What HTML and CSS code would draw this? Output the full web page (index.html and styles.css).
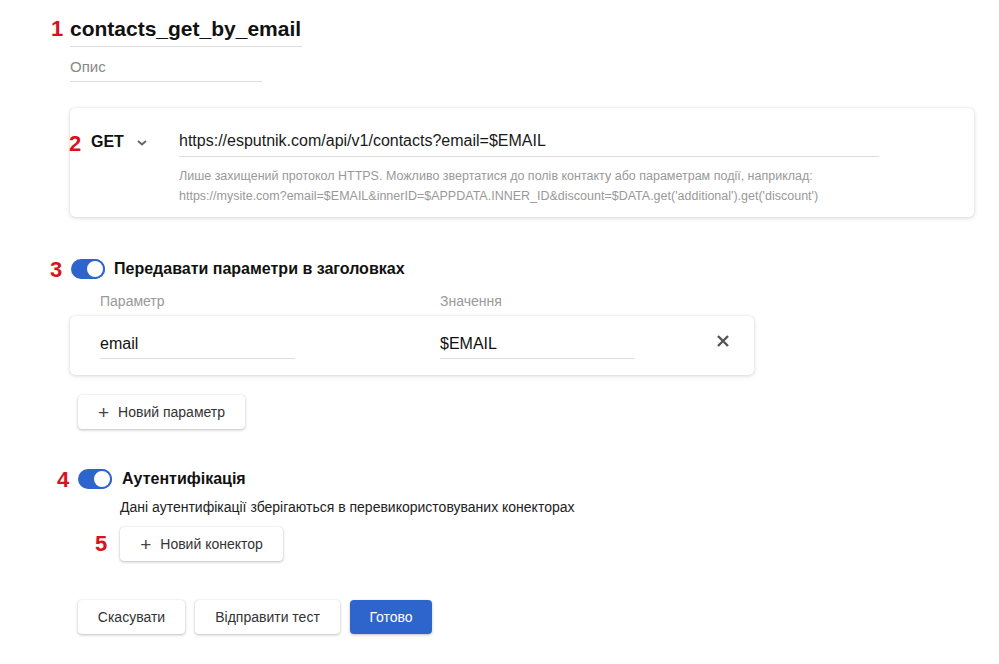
FILE: index.html
```html
<!DOCTYPE html>
<html lang="uk">
<head>
<meta charset="utf-8">
<link rel="stylesheet" href="styles.css">
</head>
<body>
<div class="page">
  <div class="name-block">
    <span class="marker m1">1</span>
    <div class="title">contacts_get_by_email</div>
    <div class="desc">Опис</div>
  </div>

  <div class="card request">
    <span class="marker m2">2</span>
    <div class="method">
      <span class="method-name">GET</span>
      <svg class="chev" width="12" height="8" viewBox="0 0 12 8"><path d="M2 2 L6 5.5 L10 2" fill="none" stroke="#666" stroke-width="2"/></svg>
    </div>
    <div class="url-col">
      <div class="url">https://esputnik.com/api/v1/contacts?email=$EMAIL</div>
      <div class="help">Лише захищений протокол HTTPS. Можливо звертатися до полів контакту або параметрам події, наприклад:<br>https://mysite.com?email=$EMAIL&amp;innerID=$APPDATA.INNER_ID&amp;discount=$DATA.get('additional').get('discount')</div>
    </div>
  </div>

  <div class="section headers">
    <div class="toggle-row">
      <span class="marker m3">3</span>
      <span class="toggle"><span class="knob"></span></span>
      <span class="toggle-label">Передавати параметри в заголовках</span>
    </div>
    <div class="col-heads">
      <span class="col-head">Параметр</span>
      <span class="col-head">Значення</span>
    </div>
    <div class="card params">
      <div class="field">email</div>
      <div class="field">$EMAIL</div>
      <svg class="close" width="14" height="14" viewBox="0 0 14 14"><path d="M2 2 L12 12 M12 2 L2 12" stroke="#555" stroke-width="2.4"/></svg>
    </div>
    <button class="btn add-param"><span class="plus">+</span>Новий параметр</button>
  </div>

  <div class="section auth">
    <div class="toggle-row">
      <span class="marker m4">4</span>
      <span class="toggle"><span class="knob"></span></span>
      <span class="toggle-label">Аутентифікація</span>
    </div>
    <div class="auth-body">
      <div class="auth-text">Дані аутентифікації зберігаються в перевикористовуваних конекторах</div>
      <div class="connector-row">
        <span class="marker m5">5</span>
        <button class="btn add-conn"><span class="plus">+</span>Новий конектор</button>
      </div>
    </div>
  </div>

  <div class="actions">
    <button class="btn cancel">Скасувати</button>
    <button class="btn test">Відправити тест</button>
    <button class="btn primary">Готово</button>
  </div>
</div>
</body>
</html>
```

FILE: styles.css
```css
* { box-sizing: border-box; }
html, body { margin: 0; padding: 0; background: #fff; }
body {
  font-family: "Liberation Sans", Arial, sans-serif;
  color: #111;
  width: 999px;
  height: 664px;
  overflow: hidden;
}
.page {
  padding: 16px 25px 0 70px;
}
.marker {
  position: absolute;
  color: #d9121b;
  font-weight: bold;
  font-size: 22px;
  line-height: 1;
}
.name-block { position: relative; }
.m1 { left: -19px; top: 2px; }
.title {
  font-size: 21px;
  font-weight: bold;
  width: 232px;
  line-height: 24px;
  padding-top: 1px;
  padding-bottom: 5px;
  border-bottom: 1px solid #ddd;
}
.desc {
  width: 192px;
  font-size: 15px;
  color: #888;
  margin-top: 11px;
  line-height: 18px;
  padding-bottom: 5px;
  border-bottom: 1px solid #ddd;
}
.card {
  position: relative;
  background: #fff;
  border-radius: 5px;
  box-shadow: 0 1px 4px rgba(0,0,0,0.16), 0 0 1px rgba(0,0,0,0.12);
}
.request {
  margin-top: 26px;
  width: 904px;
  height: 109px;
  display: flex;
  padding: 18px 0 0 21px;
}
.m2 { left: -1px; top: 25px; }
.method {
  display: flex;
  align-items: flex-start;
  width: 88px;
  padding-top: 7px;
}
.method-name { font-weight: bold; font-size: 16px; line-height: 17px; }
.chev { margin-left: 12px; margin-top: 6px; }
.url-col { width: 700px; }
.url {
  font-size: 16px;
  line-height: 20px;
  padding: 5px 0 5px;
  border-bottom: 1px solid #ddd;
  color: #1a1a1a;
}
.help {
  margin-top: 9px;
  font-size: 12.5px;
  line-height: 20px;
  color: #999;
}
.section { position: relative; }
.headers { margin-top: 42px; }
.toggle-row {
  position: relative;
  display: flex;
  align-items: center;
  height: 20px;
}
.toggle {
  position: relative;
  width: 34px;
  height: 20px;
  border-radius: 10px;
  background: #2d65cc;
  margin-left: 1px;
}
.knob {
  position: absolute;
  right: 0;
  top: 0;
  width: 20px;
  height: 20px;
  border-radius: 50%;
  background: #fff;
  border: 2px solid #2d65cc;
}
.toggle-label {
  font-weight: bold;
  font-size: 16px;
  margin-left: 9px;
}
.m3 { left: -20px; top: 0; }
.col-heads {
  display: flex;
  padding-left: 30px;
  margin-top: 14px;
  font-size: 14px;
  color: #999;
  line-height: 16px;
}
.col-head { width: 340px; }
.params {
  margin-top: 7px;
  width: 684px;
  height: 59px;
  display: flex;
  align-items: flex-start;
  padding: 12px 0 0 30px;
}
.field {
  flex: 0 0 195px;
  width: 195px;
  font-size: 16px;
  line-height: 20px;
  padding: 6px 0 4px;
  border-bottom: 1px solid #ddd;
}
.field:first-child { margin-right: 145px; }
.close { position: absolute; left: 646px; top: 18px; }
.btn {
  font-family: "Liberation Sans", Arial, sans-serif;
  font-size: 14px;
  color: #333;
  background: #fff;
  border: none;
  border-radius: 4px;
  height: 34px;
  box-shadow: 0 1px 3px rgba(0,0,0,0.25), 0 0 1px rgba(0,0,0,0.15);
  display: inline-flex;
  align-items: center;
  justify-content: center;
  padding: 0;
}
.plus {
  font-size: 19px;
  font-weight: normal;
  margin-right: 9px;
  color: #444;
  line-height: 1;
  margin-top: 1px;
}
.add-param {
  margin-top: 20px;
  margin-left: 8px;
  width: 167px;
}
.auth { margin-top: 40px; padding-left: 7px; }
.m4 { left: -20px; top: 0; }
.auth .toggle-label { margin-left: 10px; }
.auth-body { padding-left: 43px; }
.auth-text {
  margin-top: 10px;
  font-size: 14px;
  line-height: 16px;
  color: #222;
}
.connector-row { position: relative; margin-top: 12px; }
.m5 { left: -25px; top: 6px; }
.add-conn { width: 163px; }
.actions {
  display: flex;
  gap: 10px;
  margin-top: 39px;
  padding-left: 8px;
}
.cancel { width: 107px; }
.test { width: 145px; }
.primary {
  width: 82px;
  background: #2d65cc;
  color: #fff;
  box-shadow: 0 1px 3px rgba(0,0,0,0.25);
}
```
